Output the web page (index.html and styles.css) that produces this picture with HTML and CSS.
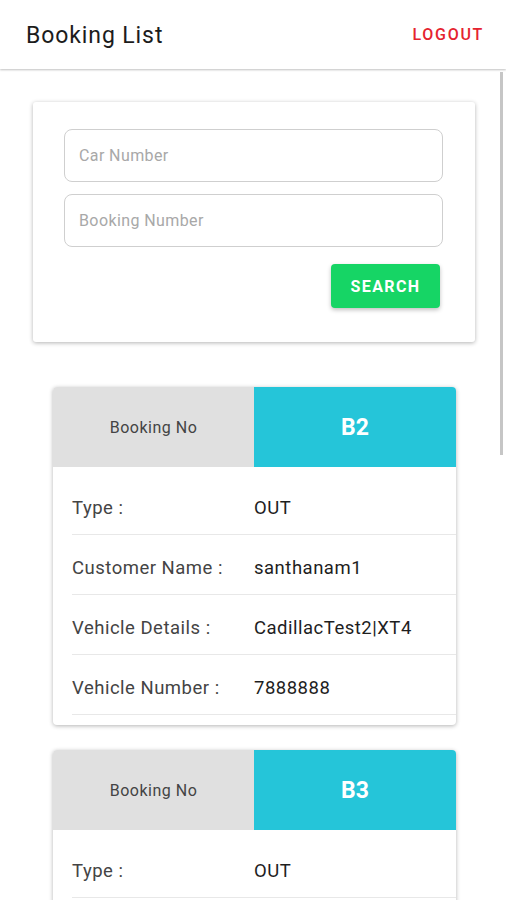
FILE: index.html
```html
<!DOCTYPE html>
<html lang="en">
<head>
    <meta charset="UTF-8">
    <meta name="viewport" content="width=device-width, initial-scale=1.0">
    <title>Booking List</title>
    <link rel="stylesheet" href="styles.css">
</head>
<body>
    <header class="topbar">
        <h1>Booking List</h1>
        <a href="#" class="logout">LOGOUT</a>
    </header>

    <div class="scroll-thumb"></div>

    <main class="content">
        <form class="search-card">
            <input type="text" placeholder="Car Number">
            <input type="text" placeholder="Booking Number">
            <div class="actions">
                <button type="button">SEARCH</button>
            </div>
        </form>

        <div class="booking">
            <div class="booking-head">
                <div class="head-label">Booking No</div>
                <div class="head-value">B2</div>
            </div>
            <div class="rows">
                <div class="row"><span class="label">Type :</span><span class="value">OUT</span></div>
                <div class="row"><span class="label">Customer Name :</span><span class="value">santhanam1</span></div>
                <div class="row"><span class="label">Vehicle Details :</span><span class="value">CadillacTest2|XT4</span></div>
                <div class="row"><span class="label">Vehicle Number :</span><span class="value">7888888</span></div>
            </div>
        </div>

        <div class="booking">
            <div class="booking-head">
                <div class="head-label">Booking No</div>
                <div class="head-value">B3</div>
            </div>
            <div class="rows">
                <div class="row"><span class="label">Type :</span><span class="value">OUT</span></div>
            </div>
        </div>
    </main>
</body>
</html>
```

FILE: styles.css
```css
html, body {
    margin: 0;
    padding: 0;
    height: 900px;
    overflow: hidden;
}

body {
    font-family: Roboto, 'Noto Sans', sans-serif;
    background: #fff;
    color: #222;
    position: relative;
}

.topbar {
    height: 69px;
    display: flex;
    align-items: center;
    justify-content: space-between;
    padding: 0 22px 0 26px;
    background: #fff;
    box-shadow: 0 1px 2px rgba(0, 0, 0, 0.25);
    position: relative;
    z-index: 2;
}

.topbar h1 {
    margin: 2px 0 0;
    font-size: 23px;
    font-weight: 400;
    letter-spacing: 0.9px;
    color: #1c1c1c;
}

.logout {
    color: #e5232f;
    text-decoration: none;
    font-size: 16px;
    letter-spacing: 1.7px;
    font-weight: 500;
}

.scroll-thumb {
    position: absolute;
    top: 72px;
    left: 500px;
    width: 3px;
    height: 383px;
    background: #c6c6c6;
}

.content {
    padding: 33px 31px 0 33px;
}

.search-card {
    background: #fff;
    border-radius: 3px;
    box-shadow: 0 1px 4px rgba(0, 0, 0, 0.3);
    padding: 27px 32px 34px 31px;
    display: flex;
    flex-direction: column;
    gap: 12px;
}

.search-card input {
    height: 53px;
    box-sizing: border-box;
    border: 1px solid #cfcfcf;
    border-radius: 8px;
    padding: 0 14px;
    font-family: inherit;
    font-size: 16px;
    letter-spacing: 0.4px;
    color: #222;
    outline: none;
}

.search-card input::placeholder {
    color: #a8a8a8;
}

.actions {
    display: flex;
    justify-content: flex-end;
    padding-top: 5px;
    padding-right: 3px;
}

.actions button {
    width: 109px;
    height: 44px;
    border: none;
    border-radius: 4px;
    background: #16d565;
    color: #fff;
    font-family: inherit;
    font-size: 16px;
    font-weight: 700;
    letter-spacing: 1.4px;
    box-shadow: 0 2px 4px rgba(0, 0, 0, 0.25);
}

.booking {
    margin: 45px 19px 0 20px;
    background: #fff;
    border-radius: 4px;
    box-shadow: 0 1px 4px rgba(0, 0, 0, 0.3);
    overflow: hidden;
}

.booking + .booking {
    margin-top: 25px;
}

.booking-head {
    display: grid;
    grid-template-columns: 201px 1fr;
    height: 80px;
}

.head-label {
    background: #e0e0e0;
    color: #444;
    font-size: 16px;
    letter-spacing: 0.5px;
    display: flex;
    align-items: center;
    justify-content: center;
}

.head-value {
    background: #25c5d9;
    color: #fff;
    font-size: 23px;
    font-weight: 700;
    display: flex;
    align-items: center;
    justify-content: center;
}

.rows {
    padding: 8px 0 10px 19px;
}

.row {
    display: flex;
    height: 60px;
    box-sizing: border-box;
    padding-top: 23px;
    line-height: 20px;
    font-size: 18.5px;
    letter-spacing: 0.5px;
    border-bottom: 1px solid #e8e8e8;
}

.label {
    width: 182px;
    color: #444;
}

.value {
    color: #1e1e1e;
}
```
